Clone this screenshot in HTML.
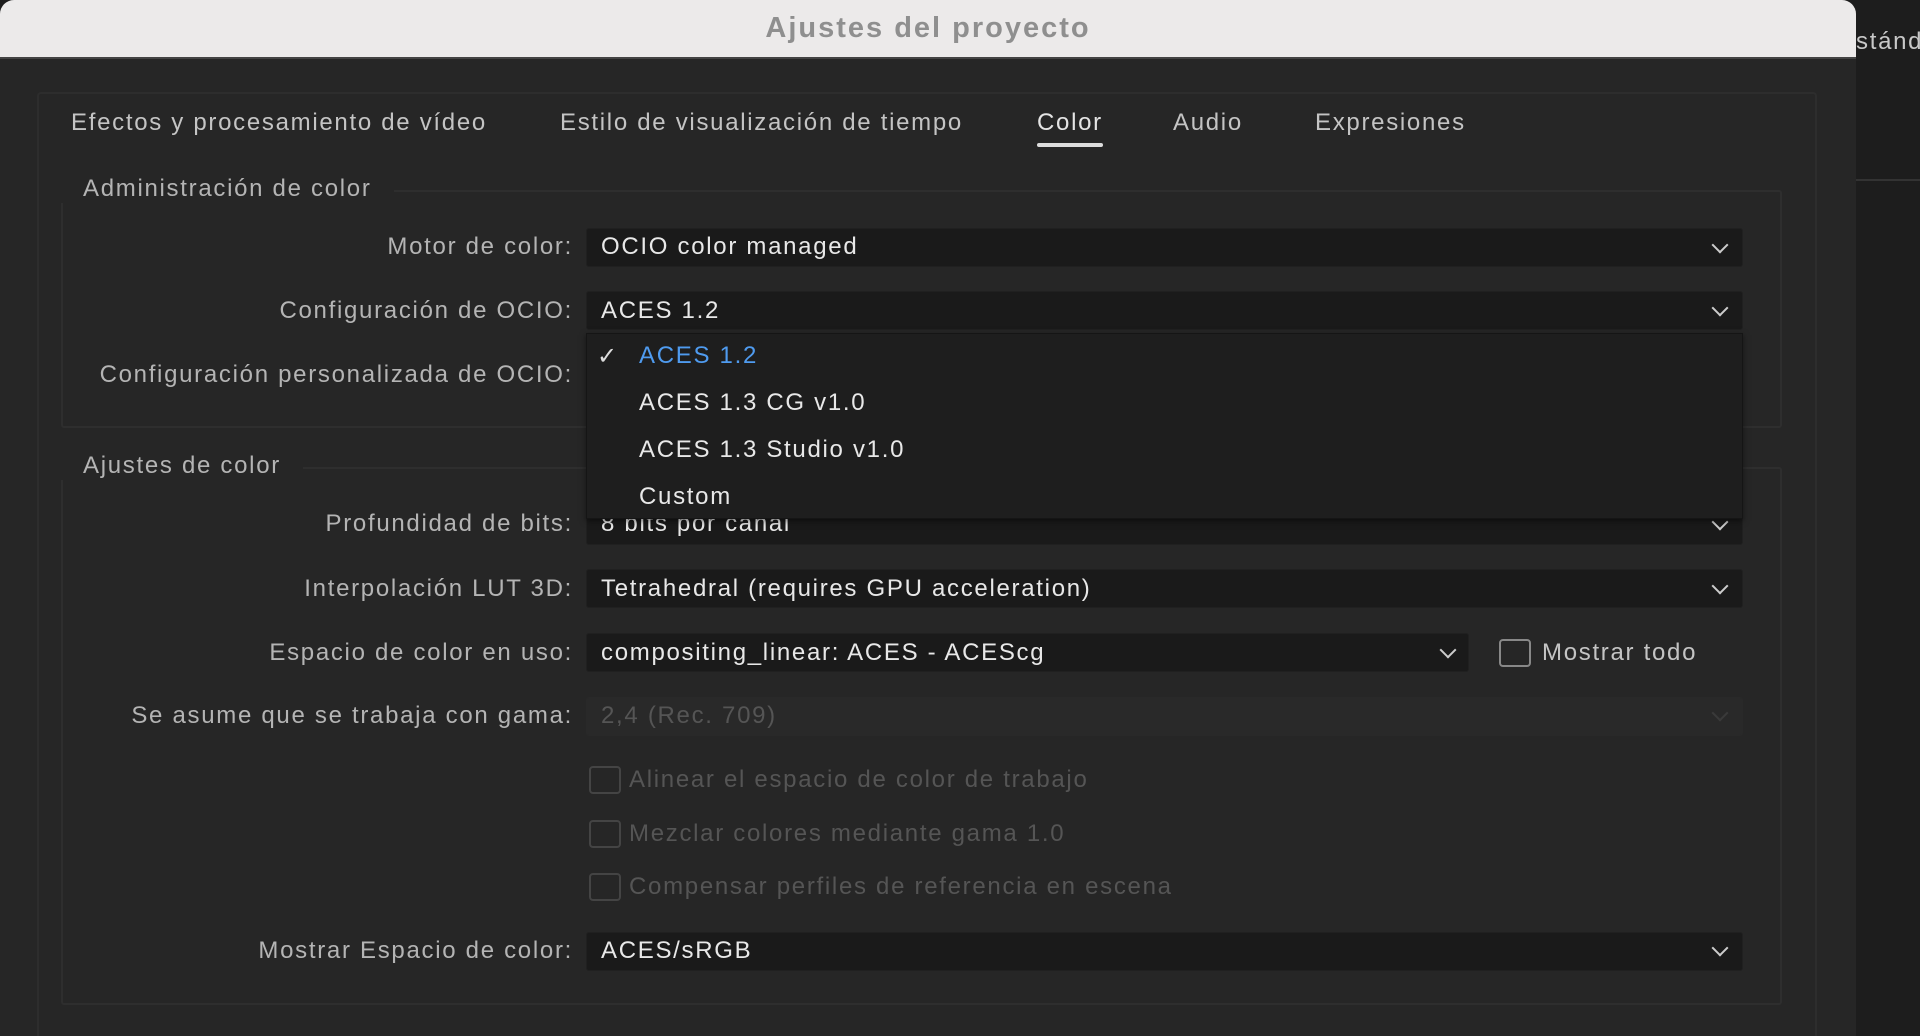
<!DOCTYPE html>
<html style="overflow:hidden;height:1036px"><head><meta charset="utf-8"><style>
*{margin:0;padding:0;box-sizing:border-box}
body{width:1920px;height:1036px;overflow:hidden;background:#1d1d1d;font-family:"Liberation Sans",sans-serif;position:relative}
.a{position:absolute;white-space:nowrap}
.t{font-size:24px;letter-spacing:1.7px}
.title{left:0;top:0;width:1856px;height:59px;background:#eceaea;border-radius:14px 14px 0 0;border-bottom:2px solid #444;text-align:center;line-height:56px;font-weight:bold;font-size:29px;letter-spacing:2px;color:#8f8f8f}
.body{left:0;top:59px;width:1856px;height:977px;background:#262626}
.panel{left:37px;top:92px;width:1780px;height:944px;border:2px solid #2d2d2d;border-bottom:none;border-radius:4px 4px 0 0}
.tab{top:109px;color:#c4c4c4}
.fs{border:2px solid #2e2e2e;border-radius:3px}
.leg{color:#b4b4b4;background:#262626;padding:0 22px 0 0}
.lab{color:#b4b4b4;text-align:right;right:1347px}
.sel{left:586px;width:1157px;height:39px;background:#1a1a1a;border-radius:3px;border:1px solid #202020}
.val{color:#e8e8e8;left:601px}
.chev{width:12px;height:12px;border-right:2px solid #ccc;border-bottom:2px solid #ccc;transform:rotate(45deg)}
.cb{width:32px;height:28px;border:2px solid #444;border-radius:4px}
.dis{color:#555}
</style></head><body>
<div class="a title">Ajustes del proyecto</div>
<div class="a t" style="left:1856px;top:28px;color:#c8c8c8">stándar</div>
<div class="a" style="left:1856px;top:179px;width:64px;height:2px;background:#333"></div>
<div class="a body"></div>
<div class="a panel"></div>
<div class="a t tab" style="left:71px">Efectos y procesamiento de vídeo</div>
<div class="a t tab" style="left:560px">Estilo de visualización de tiempo</div>
<div class="a t tab" style="left:1037px;color:#e4e4e4">Color</div>
<div class="a" style="left:1037px;top:143px;width:66px;height:4px;background:#ddd;border-radius:2px"></div>
<div class="a t tab" style="left:1173px">Audio</div>
<div class="a t tab" style="left:1315px">Expresiones</div>

<div class="a fs" style="left:61px;top:190px;width:1721px;height:238px"></div>
<div class="a t leg" style="left:61px;top:175px;padding-left:22px">Administración de color</div>
<div class="a fs" style="left:61px;top:467px;width:1721px;height:538px"></div>
<div class="a t leg" style="left:61px;top:452px;padding-left:22px">Ajustes de color</div>

<div class="a t lab" style="top:233px">Motor de color:</div>
<div class="a sel" style="top:228px"></div><div class="a t val" style="top:233px">OCIO color managed</div>
<div class="a chev" style="left:1714px;top:239px"></div>

<div class="a t lab" style="top:297px">Configuración de OCIO:</div>
<div class="a sel" style="top:291px"></div><div class="a t val" style="top:297px">ACES 1.2</div>
<div class="a chev" style="left:1714px;top:302px"></div>
<div class="a t lab" style="top:361px">Configuración personalizada de OCIO:</div>

<div class="a t lab" style="top:510px">Profundidad de bits:</div>
<div class="a sel" style="top:506px"></div><div class="a t val" style="top:510px">8 bits por canal</div>
<div class="a chev" style="left:1714px;top:516px"></div>

<div class="a" style="left:586px;top:333px;width:1157px;height:186px;background:#1e1e1e;border:1px solid #151515;box-shadow:0 2px 6px rgba(0,0,0,.5)"></div>
<div class="a" style="left:597px;top:342px;font-size:24px;color:#ddd">✓</div>
<div class="a t val" style="left:639px;top:342px;color:#4f9bef">ACES 1.2</div>
<div class="a t val" style="left:639px;top:389px">ACES 1.3 CG v1.0</div>
<div class="a t val" style="left:639px;top:436px">ACES 1.3 Studio v1.0</div>
<div class="a t val" style="left:639px;top:483px">Custom</div>

<div class="a t lab" style="top:575px">Interpolación LUT 3D:</div>
<div class="a sel" style="top:569px"></div><div class="a t val" style="top:575px">Tetrahedral (requires GPU acceleration)</div>
<div class="a chev" style="left:1714px;top:580px"></div>

<div class="a t lab" style="top:639px">Espacio de color en uso:</div>
<div class="a sel" style="top:633px;width:883px"></div><div class="a t val" style="top:639px">compositing_linear: ACES - ACEScg</div>
<div class="a chev" style="left:1442px;top:644px"></div>
<div class="a cb" style="left:1499px;top:639px;border-color:#888"></div>
<div class="a t val" style="left:1542px;top:639px;color:#c4c4c4">Mostrar todo</div>

<div class="a t lab" style="top:702px">Se asume que se trabaja con gama:</div>
<div class="a sel" style="top:697px;background:#292929;border-color:#292929"></div><div class="a t val" style="top:702px;color:#555">2,4 (Rec. 709)</div>
<div class="a chev" style="left:1714px;top:707px;border-color:#3a3a3a"></div>

<div class="a cb" style="left:589px;top:766px"></div><div class="a t dis" style="left:629px;top:766px">Alinear el espacio de color de trabajo</div>
<div class="a cb" style="left:589px;top:820px"></div><div class="a t dis" style="left:629px;top:820px">Mezclar colores mediante gama 1.0</div>
<div class="a cb" style="left:589px;top:873px"></div><div class="a t dis" style="left:629px;top:873px">Compensar perfiles de referencia en escena</div>

<div class="a t lab" style="top:937px">Mostrar Espacio de color:</div>
<div class="a sel" style="top:932px"></div><div class="a t val" style="top:937px">ACES/sRGB</div>
<div class="a chev" style="left:1714px;top:942px"></div>
</body></html>
